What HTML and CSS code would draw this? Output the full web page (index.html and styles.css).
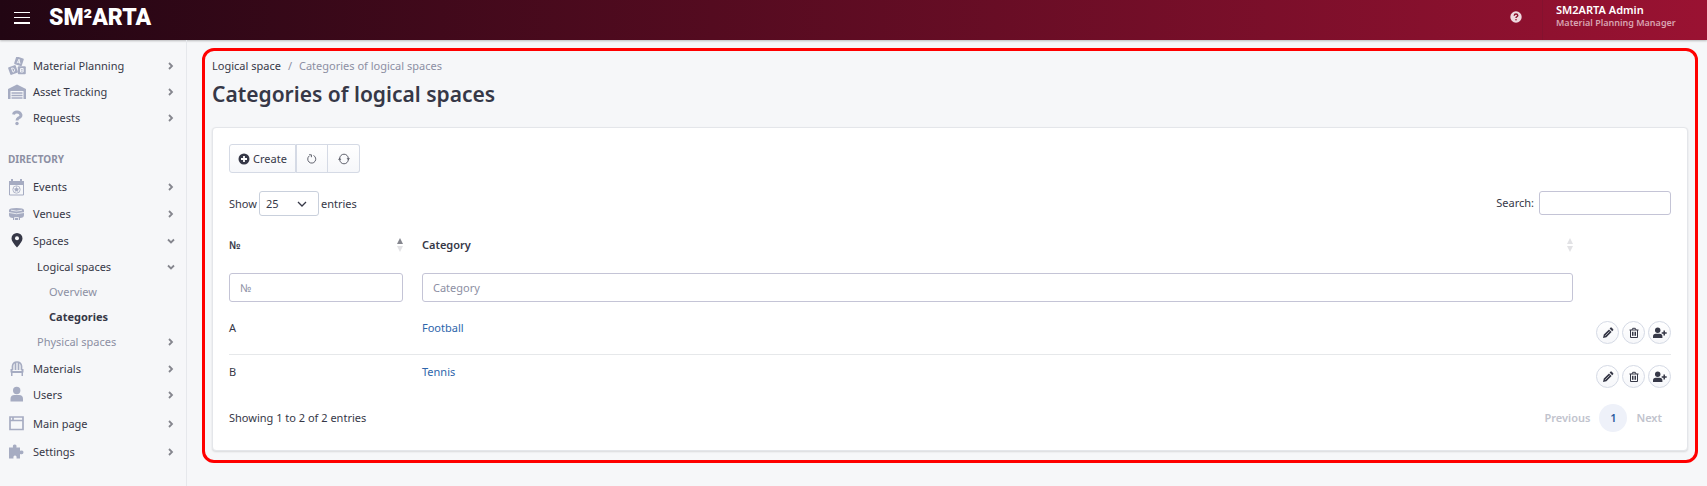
FILE: index.html
```html
<!DOCTYPE html>
<html lang="en">
<head>
<meta charset="utf-8">
<title>Categories of logical spaces</title>
<link rel="stylesheet" href="styles.css">
</head>
<body>
<svg class="sprite" aria-hidden="true">
  <symbol id="right" viewBox="0 0 8 8"><path d="M2 1l3 3-3 3" fill="none" stroke="currentColor" stroke-width="1.8"/></symbol>
  <symbol id="down" viewBox="0 0 8 8"><path d="M1 2.500l3 3 3-3" fill="none" stroke="currentColor" stroke-width="1.8"/></symbol>
  <symbol id="sort" viewBox="0 0 6 14"><path class="sort-up" d="M3 0l3 6H0z"/><path class="sort-down" d="M0 8h6l-3 6z"/></symbol>
  <symbol id="pencil" viewBox="0 0 12 12"><path d="M1 11l.8-3.400 5.200-5.200 2.600 2.600-5.200 5.200zM7.600 1.600l1-1q.5-.4 1 0l1.600 1.600q.4.500 0 1l-1 1z" fill="currentColor"/><path d="M3.200 8.800l4.300-4.300" stroke="#fff" stroke-width=".6"/></symbol>
  <symbol id="trash" viewBox="0 0 12 12"><path d="M1.500 3h9M4 3l.7-1.700h2.600L8 3M2.500 3v7.500h7V3M4.500 4.800v4M6 4.800v4M7.500 4.800v4" fill="none" stroke="currentColor"/></symbol>
  <symbol id="useradd" viewBox="0 0 14 12"><circle cx="4.700" cy="3.200" r="2.700" fill="currentColor"/><path d="M0 11V9.500Q0 6.700 2.800 6.700h3.800q2.800 0 2.800 2.800V11z" fill="currentColor"/><path d="M11.200 3.500v5M8.700 6h5" stroke="currentColor" stroke-width="1.500"/></symbol>
</svg>
<header class="topbar">
  <button class="burger" aria-label="Toggle menu"><span></span><span></span><span></span></button>
  <a class="logo" href="#">SM²ARTA</a>
  <a class="help" href="#" aria-label="Help"><svg viewBox="0 0 12 12"><circle cx="6" cy="6" r="5.700" fill="#eed9df"/><path d="M4.200 4.700Q4.300 3 6 3t1.800 1.500Q7.800 5.300 6.700 5.800 6 6.200 6 7" fill="none" stroke="#8c112d" stroke-width="1.400"/><circle cx="6" cy="8.700" r=".8" fill="#8c112d"/></svg></a>
  <div class="account"><strong>SM2ARTA Admin</strong><span>Material Planning Manager</span></div>
</header>
<div class="shell">
  <nav class="sidebar" aria-label="Main">
    <ul class="menu compact">
      <li><a href="#"><svg class="icon" viewBox="0 0 18 18"><g fill="#a6acc2"><rect x="7" y="0" width="8" height="8" rx="1" transform="rotate(18 10 4)"/><rect x="1" y="9" width="8" height="8" rx="1" transform="rotate(-20 5 13)"/><rect x="9.800" y="9.300" width="8" height="8" rx="1"/></g><path d="M9 6.200l2-4 1 4.600M9.800 5l2 .5M3.500 11.200l1.500 4q2.300-.8 1.500-2.800t-3-1.200M12.500 11.500h2.700v3.500h-2.700zM12.500 13.200h2.700" fill="none" stroke="#f6f7f9" stroke-width=".9"/></svg><span>Material Planning</span><svg class="arrow"><use href="#right"/></svg></a></li>
      <li><a href="#"><svg class="icon" viewBox="0 0 18 18"><path d="M0 16V6l9-4.500L18 6v10h-2.500V8h-13v8z" fill="#a6acc2"/><path d="M3.500 10h11M3.500 12.500h11M3.500 15h11" stroke="#a6acc2" stroke-width="1.700"/></svg><span>Asset Tracking</span><svg class="arrow"><use href="#right"/></svg></a></li>
      <li><a href="#"><svg class="icon" viewBox="0 0 18 18"><path d="M5.500 5.500Q6 3 9 3t4 3q0 2-2.500 3Q9 10 9 11.500" fill="none" stroke="#a6acc2" stroke-width="2.900"/><circle cx="9" cy="14.500" r="1.700" fill="#a6acc2"/></svg><span>Requests</span><svg class="arrow"><use href="#right"/></svg></a></li>
    </ul>
    <h2 class="section">DIRECTORY</h2>
    <ul class="menu">
      <li><a href="#"><svg class="icon" viewBox="0 0 18 18"><path d="M1.500 3.500h14V17h-14z" fill="none" stroke="#a6acc2"/><path d="M1 3h15v4H1zM3 1h2v3H3zM12 1h2v3h-2z" fill="#a6acc2"/><circle cx="8.500" cy="11.500" r="3.700" fill="none" stroke="#a6acc2" stroke-width=".8"/><path d="M8.500 9.800l1.700 1.200-.6 2H7.400l-.6-2zM8.500 8v2M5 10.500l2 .5M12 10.500l-2 .5M6.500 14.500l1-1.500M10.500 14.500l-1-1.500" fill="#a6acc2" stroke="#a6acc2" stroke-width=".5"/></svg><span>Events</span><svg class="arrow"><use href="#right"/></svg></a></li>
      <li><a href="#"><svg class="icon" viewBox="0 0 18 18"><path d="M1 5q0-2 7.500-2T16 5v5q0 3-4 3v2H5v-2q-4 0-4-3z" fill="#a6acc2"/><path d="M3 5.200q5.500 1.800 11 0M1 7.500q7.500 2.500 15 0M6.500 15v-2.500h4V15" fill="none" stroke="#f6f7f9" stroke-width=".8"/></svg><span>Venues</span><svg class="arrow"><use href="#right"/></svg></a></li>
      <li><a href="#"><svg class="icon" viewBox="0 0 18 18"><path d="M9 15.500Q3.500 9.500 3.500 6.500a5.500 5.500 0 0 1 11 0Q14.500 9.500 9 15.500z" fill="#363847"/><circle cx="9" cy="6.300" r="2" fill="#f6f7f9"/></svg><span>Spaces</span><svg class="arrow"><use href="#down"/></svg></a>
        <ul class="submenu">
          <li><a href="#"><span>Logical spaces</span><svg class="arrow"><use href="#down"/></svg></a>
            <ul class="leaves">
              <li><a class="muted" href="#">Overview</a></li>
              <li><a class="current" href="#" aria-current="page">Categories</a></li>
            </ul>
          </li>
          <li><a class="muted" href="#"><span>Physical spaces</span><svg class="arrow"><use href="#right"/></svg></a></li>
        </ul>
      </li>
    </ul>
    <ul class="menu compact">
      <li><a href="#"><svg class="icon" viewBox="0 0 18 18"><path d="M4.500 10V6Q5 2 9 2t4.500 4v4M7.500 10V3M10.500 10V3" fill="none" stroke="#a6acc2" stroke-width="1.700"/><path d="M2.500 9h2v2h9V9h2v3.500H15V16h-1.500v-3h-9v3H3v-3.500h-.5z" fill="#a6acc2"/></svg><span>Materials</span><svg class="arrow"><use href="#right"/></svg></a></li>
      <li><a href="#"><svg class="icon" viewBox="0 0 18 18"><circle cx="8.700" cy="4.500" r="3.700" fill="#a6acc2"/><path d="M2.500 15.500V13q0-4 4-4h4.500q4 0 4 4v2.500z" fill="#a6acc2"/></svg><span>Users</span><svg class="arrow"><use href="#right"/></svg></a></li>
    </ul>
    <ul class="menu roomy">
      <li><a href="#"><svg class="icon" viewBox="0 0 18 18"><path d="M2 2h13v12.500H2zM2 5.500h13M5 2v3" fill="none" stroke="#a6acc2" stroke-width="1.700"/></svg><span>Main page</span><svg class="arrow"><use href="#right"/></svg></a></li>
      <li><a href="#"><svg class="icon" viewBox="0 0 18 18"><path d="M1 4.500h4q-.7-3 1.700-3t1.700 3h3.600v3.300q3.500-1.300 3.500 1.500T12 11v4.500H8.500q.5-3-1.500-3t-1.500 3H1z" fill="#a6acc2"/></svg><span>Settings</span><svg class="arrow"><use href="#right"/></svg></a></li>
    </ul>
  </nav>
  <main class="frame">
    <nav class="crumbs" aria-label="Breadcrumb"><a href="#">Logical space</a><span>/</span><span>Categories of logical spaces</span></nav>
    <h1>Categories of logical spaces</h1>
    <section class="card">
      <div class="toolbar">
        <button class="create"><svg viewBox="0 0 12 12"><circle cx="6" cy="6" r="5.500" fill="#363847"/><path d="M6 3v6M3 6h6" stroke="#fff" stroke-width="1.800"/></svg>Create</button>
        <button class="tool" aria-label="Reset"><svg viewBox="0 0 12 12"><path d="M3.200 3a4 4 0 1 0 4.300-.5M3 1.800h2.400v2.400" fill="none" stroke="#50525f" stroke-width=".9"/></svg></button>
        <button class="tool" aria-label="Reload"><svg viewBox="0 0 12 12"><path d="M1.700 5.500a4.300 4.300 0 0 1 8.600 0M10.300 6.500a4.300 4.300 0 0 1-8.600 0" fill="none" stroke="#50525f" stroke-width=".9"/><path d="M8.600 5.200h3.400l-1.700 2zM0 6.800h3.400l-1.700-2z" fill="#50525f"/></svg></button>
      </div>
      <div class="controls">
        <label class="length">Show
          <span class="picker"><select><option>10</option><option selected>25</option><option>50</option></select><svg viewBox="0 0 10 6"><path d="M1 1l4 4 4-4" fill="none" stroke="#363847" stroke-width="1.300"/></svg></span>
          entries</label>
        <label class="search">Search: <input type="search"></label>
      </div>
      <table>
        <colgroup><col class="col-number"><col><col class="col-actions"></colgroup>
        <thead>
          <tr class="titles">
            <th><div>№<svg class="sort asc"><use href="#sort"/></svg></div></th>
            <th><div>Category<svg class="sort"><use href="#sort"/></svg></div></th>
            <th></th>
          </tr>
          <tr class="filters">
            <th><input type="text" placeholder="№" aria-label="Filter by №"></th>
            <th><input type="text" placeholder="Category" aria-label="Filter by category"></th>
            <th></th>
          </tr>
        </thead>
        <tbody>
          <tr><td>A</td><td><a href="#">Football</a></td><td><div class="actions"><button aria-label="Edit"><svg><use href="#pencil"/></svg></button><button aria-label="Delete"><svg><use href="#trash"/></svg></button><button aria-label="Add user"><svg class="wide"><use href="#useradd"/></svg></button></div></td></tr>
          <tr><td>B</td><td><a href="#">Tennis</a></td><td><div class="actions"><button aria-label="Edit"><svg><use href="#pencil"/></svg></button><button aria-label="Delete"><svg><use href="#trash"/></svg></button><button aria-label="Add user"><svg class="wide"><use href="#useradd"/></svg></button></div></td></tr>
        </tbody>
      </table>
      <footer class="summary">
        <span>Showing 1 to 2 of 2 entries</span>
        <div class="pages"><button disabled>Previous</button><button class="active">1</button><button disabled>Next</button></div>
      </footer>
    </section>
  </main>
</div>
</body>
</html>
```
FILE: styles.css
```css
* { box-sizing: border-box; }
body {
  margin: 0;
  min-height: 100vh;
  display: flex;
  flex-direction: column;
  background: #f6f7f9;
  color: #363847;
  font: 11px/16px "Noto Sans", sans-serif;
}
a { color: inherit; text-decoration: none; }
button, input, select { font: inherit; color: inherit; margin: 0; }
button { padding: 0; border: 0; background: none; }
ul { list-style: none; margin: 0; padding: 0; }
svg { flex: none; display: block; }
.sprite { position: absolute; width: 0; height: 0; }

.topbar {
  display: flex;
  align-items: center;
  height: 40px;
  padding-left: 14px;
  color: #fff;
  background: linear-gradient(90deg, #220613, #9a1232);
  box-shadow: 0 1px 2px rgba(0, 0, 0, .25);
}
.burger { display: grid; gap: 4px; width: 16px; margin-bottom: 5px; }
.burger span { height: 1px; background: #fff; }
.burger span:last-child { height: 2px; }
.logo { margin: 0 auto 4px 19px; font: 900 23px/28px Roboto, sans-serif; }
.help { margin: 0 20px 6px 0; }
.help svg { width: 12px; height: 12px; }
.account {
  display: flex;
  flex-direction: column;
  align-self: stretch;
  width: 165px;
  padding: 3px 0 0 13px;
  border-left: 1px solid #84122e;
  font-weight: 600;
  font-size: 9px;
  line-height: 12px;
}
.account strong { font-size: 11px; line-height: 14px; font-weight: 600; }
.account span { color: #d9a5b2; }

.shell { flex: 1; display: flex; }
.sidebar { width: 187px; padding-top: 13px; border-right: 1px solid #e6e8ec; }
.menu a { display: flex; align-items: center; height: 27px; padding: 0 11px 0 8px; }
.menu .icon { width: 18px; height: 18px; margin-right: 7px; }
.arrow { width: 8px; height: 8px; margin-left: auto; color: #85868e; }
.section { margin: 20px 0 6px 8px; font-size: 10px; line-height: 16px; font-weight: 700; color: #8c8fa3; }
.menu .submenu { padding-bottom: 2px; }
.menu .submenu a { height: 25px; padding-left: 37px; }
.menu .leaves a { padding-left: 49px; }
.menu .muted { color: #8c8fa3; }
.menu .current { font-weight: 700; }
.compact a { height: 26px; }
.roomy { margin-top: 2px; }
.roomy a { height: 28px; }

.frame {
  flex: 1;
  min-width: 0;
  align-self: flex-start;
  margin: 8px 9px 22px 15px;
  padding: 7px 7px 9px;
  border: 3px solid #f00;
  border-radius: 12px;
}
.crumbs { display: flex; gap: 7px; color: #8c8fa3; }
.crumbs a { color: #363847; }
h1 { margin: 6px 0 18px; font-size: 21px; line-height: 29px; font-weight: 600; }
.card {
  padding: 16px 16px 18px;
  background: #fff;
  border: 1px solid #e4e6ea;
  border-radius: 4px;
  box-shadow: 0 1px 2px rgba(0, 0, 0, .12);
}
.toolbar { display: flex; }
.toolbar button {
  display: flex;
  align-items: center;
  justify-content: center;
  height: 29px;
  border: 1px solid #d5dae5;
  background: linear-gradient(#fff, #f6f7fa);
}
.toolbar svg { width: 12px; height: 12px; }
.toolbar .create { gap: 3px; width: 67px; border-radius: 3px 0 0 3px; }
.toolbar .tool { width: 32px; }
.toolbar .tool:last-child { border-left: 0; border-radius: 0 3px 3px 0; }
.controls { display: flex; justify-content: space-between; align-items: flex-start; margin-top: 18px; }
.length, .search { display: flex; align-items: center; }
.length { gap: 2px; }
.search { gap: 5px; }
.picker { display: grid; align-items: center; }
.picker select, .picker svg { grid-area: 1 / 1; }
.picker select { appearance: none; width: 60px; height: 25px; padding: 0 6px; border: 1px solid #c9d0dc; border-radius: 3px; background: #fff; }
.picker svg { width: 10px; height: 6px; justify-self: end; margin-right: 12px; pointer-events: none; }
input { border: 1px solid #c4c4d6; border-radius: 3px; background: #fff; }
.search input { width: 132px; height: 24px; }
table { width: 100%; table-layout: fixed; border-collapse: collapse; margin-top: 14px; }
.col-number { width: 193px; }
.col-actions { width: 98px; }
th { padding: 0; text-align: left; font-weight: 600; }
th:first-child { padding-right: 19px; }
.titles div { display: flex; align-items: center; justify-content: space-between; height: 30px; }
.sort { width: 6px; height: 14px; fill: #e2e2e5; }
.sort-up { fill: var(--up, #e2e2e5); }
.asc { --up: #85868e; }
.filters th { padding-top: 13px; padding-bottom: 9px; font-weight: 400; }
.filters input { display: block; width: 100%; height: 29px; padding: 0 10px; }
.filters input::placeholder { color: #8c8fa3; opacity: 1; }
td { padding: 10px 0; line-height: 14px; vertical-align: top; }
td a { color: #2d65ab; }
tbody tr + tr { border-top: 1px solid #e6e8ea; }
.actions { display: flex; justify-content: flex-end; gap: 3px; }
.actions button {
  display: grid;
  place-items: center;
  width: 23px;
  height: 23px;
  border: 1px solid #d5dae5;
  border-radius: 50%;
  background: linear-gradient(#fff, #f6f7fa);
}
.actions svg { width: 12px; height: 12px; }
.actions .wide { width: 14px; }
.summary { display: flex; align-items: center; justify-content: space-between; margin-top: 6px; }
.pages { display: flex; align-items: center; }
.pages button { padding: 0 9px; font-weight: 600; color: #c1c3cd; }
.pages .active { height: 28px; padding: 0; width: 28px; border-radius: 50%; background: #eef1f9; color: #2d5b9f; }
```
